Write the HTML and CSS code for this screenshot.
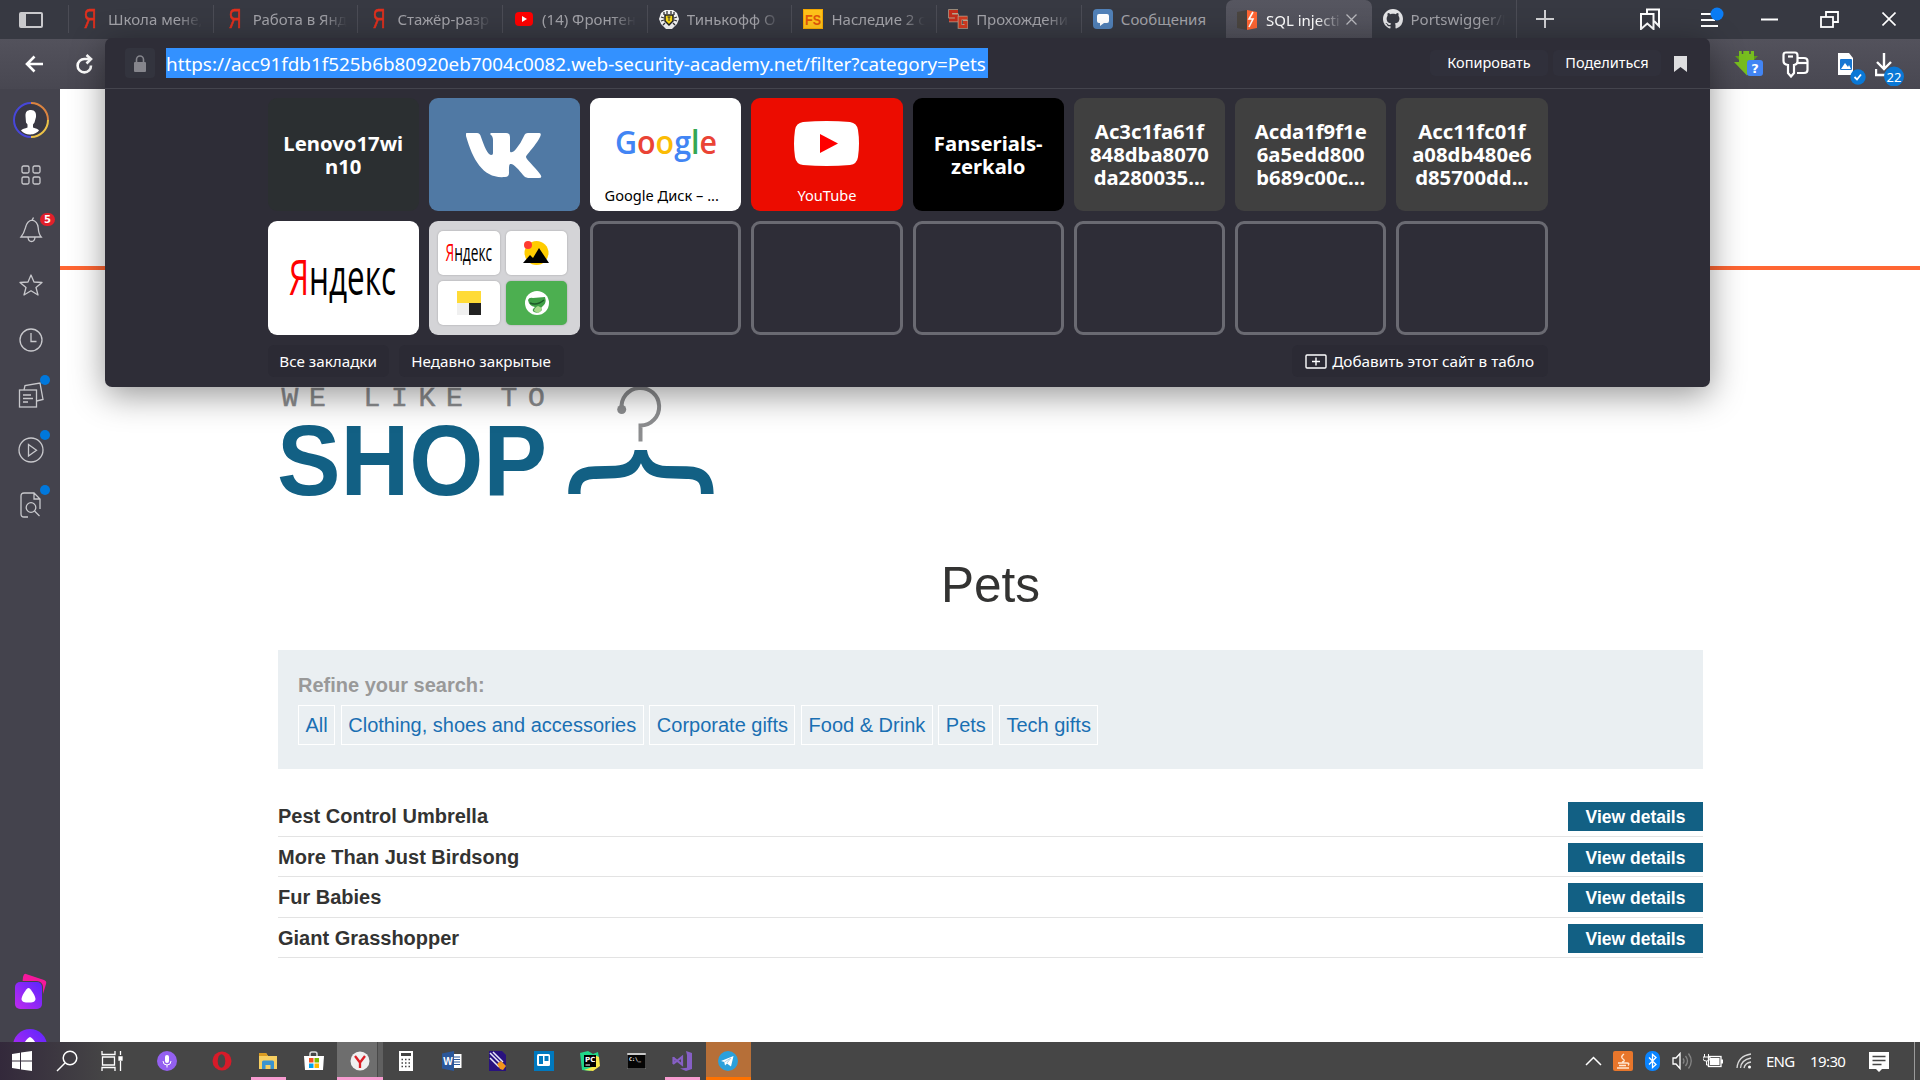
FILE: index.html
```html
<!DOCTYPE html>
<html lang="ru">
<head>
<meta charset="utf-8">
<title>SQL injection</title>
<link rel="stylesheet" href="styles.css">
</head>
<body>
<div class="screen">
  <header class="tabstrip">
    <div class="panel-toggle"><svg width="24" height="16" viewBox="0 0 24 16"><rect x="1" y="1" width="22" height="14" rx="1" fill="none" stroke="#c9c9cc" stroke-width="2"/><rect x="1" y="1" width="6" height="14" fill="#c9c9cc"/></svg></div>
    <div class="tab"><span class="fav ya">Я</span><span class="tab-title">Школа мене,</span></div>
    <div class="tab"><span class="fav ya">Я</span><span class="tab-title">Работа в Янд</span></div>
    <div class="tab"><span class="fav ya">Я</span><span class="tab-title">Стажёр-разр</span></div>
    <div class="tab"><svg class="fav" width="20" height="20" viewBox="0 0 20 20"><rect x="1" y="3" width="18" height="14" rx="4" fill="#f00"/><path d="M8 7l5 3-5 3z" fill="#fff"/></svg><span class="tab-title">(14) Фронтен</span></div>
    <div class="tab"><svg class="fav" width="20" height="20" viewBox="0 0 20 20"><path d="M6 1h8l4 3 2 6-2 5-5 5H7l-5-5-2-5 2-6z" fill="#f4f4f4"/><path d="M5 3v3M8 2v3M12 2v3M15 3v3M2 8l3 1M2 12l3-1M18 8l-3 1M18 12l-3-1M4 16l2-2M16 16l-2-2" stroke="#333" stroke-width="1.300"/><path d="M6 6h8v6l-4 4-4-4z" fill="#f7d917" stroke="#222" stroke-width="1.500"/><path d="M8.500 8h3M10 8v4" stroke="#333"/></svg><span class="tab-title">Тинькофф О</span></div>
    <div class="tab"><svg class="fav" width="20" height="20" viewBox="0 0 20 20"><rect width="20" height="20" fill="#f5a800"/><rect x="1" y="1" width="18" height="18" fill="#ffc21a"/><text x="10" y="15.500" text-anchor="middle" textLength="16" lengthAdjust="spacingAndGlyphs" class="fs">FS</text></svg><span class="tab-title">Наследие 2 с</span></div>
    <div class="tab"><svg class="fav" width="20" height="20" viewBox="0 0 20 20"><path d="M10 2.500H2.500v4.500h6v4H1" fill="none" stroke="#b9a58f" stroke-width="4.600"/><path d="M10 2.500H2.500v4.500h6v4H1" fill="none" stroke="#c42d1c" stroke-width="3.200"/><path d="M19.500 9H12v8.500h6v-4h-3" fill="none" stroke="#b9a58f" stroke-width="4.600"/><path d="M19.500 9H12v8.500h6v-4h-3" fill="none" stroke="#d13a20" stroke-width="3"/></svg><span class="tab-title">Прохождени</span></div>
    <div class="tab"><svg class="fav" width="20" height="20" viewBox="0 0 20 20"><rect width="20" height="20" rx="4" fill="#5181b8"/><path d="M6 5h8q2 0 2 2v5q0 2-2 2h-3l-4 3v-3H6q-2 0-2-2V7q0-2 2-2z" fill="#fff"/></svg><span class="tab-title">Сообщения</span></div>
    <div class="tab active"><svg class="fav" width="20" height="20" viewBox="0 0 20 20"><path d="M0 2l10-2v20L0 18z" fill="#4a4540"/><path d="M10 0l10 2v16l-10 2z" fill="#ff6633"/><path d="M16 2l-4 7h4l-4 8" fill="none" stroke="#fff" stroke-width="1.600"/></svg><span class="tab-title">SQL injecti</span><svg class="tab-close" width="11" height="11" viewBox="0 0 11 11"><path d="M.5.5l10 10M10.500.5l-10 10" stroke="#b9b9be" stroke-width="1.300"/></svg></div>
    <div class="tab github"><svg class="fav" width="20" height="20" viewBox="0 0 16 16"><path fill="#e4e4e6" d="M8 0C3.580 0 0 3.580 0 8c0 3.540 2.290 6.530 5.470 7.590.4.070.55-.17.55-.38 0-.19-.01-.82-.01-1.490-2.010.37-2.530-.49-2.690-.94-.09-.23-.48-.94-.82-1.130-.28-.15-.68-.52-.01-.53.63-.01 1.080.58 1.230.82.72 1.210 1.870.87 2.330.66.070-.52.28-.87.51-1.070-1.780-.2-3.640-.89-3.640-3.950 0-.87.31-1.590.82-2.150-.08-.2-.36-1.020.08-2.120 0 0 .67-.21 2.200.82.64-.18 1.320-.27 2-.27s1.360.09 2 .27c1.530-1.040 2.200-.82 2.200-.82.44 1.100.16 1.920.08 2.120.51.56.82 1.270.82 2.150 0 3.070-1.870 3.750-3.650 3.950.29.25.54.73.54 1.480 0 1.070-.01 1.930-.01 2.200 0 .21.15.46.55.38A8.010 8.010 0 0 0 16 8c0-4.420-3.580-8-8-8z"/></svg><span class="tab-title">Portswigger/L</span></div>
    <div class="new-tab"><svg width="18" height="18" viewBox="0 0 18 18"><path d="M9 0v18M0 9h18" stroke="#d0d0d3" stroke-width="2"/></svg></div>
    <div class="window-controls">
      <svg width="20" height="22" viewBox="0 0 20 22" fill="none" stroke="#fff" stroke-width="2"><path d="M7 6V1.500h12V18l-5-5"/><path d="M1 6h12.500v15l-6.200-5.500L1 21z"/></svg>
      <svg class="menu-icon" width="24" height="22" viewBox="0 0 24 22"><path d="M1 8h10M1 14h14M1 20h17" stroke="#fff" stroke-width="2"/><circle cx="17" cy="8" r="6.500" fill="#0a7cf5"/></svg>
      <svg class="min-icon" width="17" height="3" viewBox="0 0 17 3"><path d="M0 1.500h17" stroke="#fff" stroke-width="2"/></svg>
      <svg class="restore-icon" width="19" height="17" viewBox="0 0 19 17" fill="none" stroke="#fff" stroke-width="1.800"><rect x="1" y="6" width="12" height="10"/><path d="M6 6V1h12v10h-5"/></svg>
      <svg class="close-icon" width="14" height="14" viewBox="0 0 14 14"><path d="M.5.5l13 13M13.500.5l-13 13" stroke="#fff" stroke-width="1.600"/></svg>
    </div>
  </header>

  <div class="toolbar">
    <svg class="back" width="20" height="18" viewBox="0 0 20 18" fill="none" stroke="#fff" stroke-width="2.600"><path d="M18 9H2M9.500 1.500L2 9l7.500 7.500"/></svg>
    <svg class="reload" width="18" height="20" viewBox="0 0 18 20" fill="none" stroke="#fff" stroke-width="2.600"><path d="M15 11.500A6.700 6.700 0 1 1 8.500 5H14"/><path d="M10.500 1l4.500 4-4.500 4.500"/></svg>
    <div class="extensions">
      <svg width="30" height="26" viewBox="0 0 30 26"><path d="M5 0h15v11h5L13 24.500 0 11h5z" fill="#77bd1f"/><path d="M1 5l4 4V5zM24 5l-4 4V5z" fill="#5c9a18"/><path d="M8.500 0v3M16 0v3" stroke="#4b4a54" stroke-width="1.500"/><rect x="13" y="9" width="16" height="16" rx="3" fill="#4285f4"/><text x="21" y="22" text-anchor="middle" class="qmark">?</text></svg>
      <svg class="key-icon" width="27" height="27" viewBox="0 0 27 27" fill="none" stroke="#fff" stroke-width="2.200"><path d="M14 7h8q3.500 0 3.500 3v9q0 3-3.500 3h-7"/><path d="M16 12h9"/><path d="M4 1.500h9q2.500 0 2.500 3v6q0 3-3.500 3.500V22l-3 3.500L6 22v-8q-4.500-.5-4.500-4V4q0-2.500 2.500-2.500z" fill="#4b4a54"/><path d="M6 5.500h5"/></svg>
      <svg class="file-icon" width="30" height="34" viewBox="0 0 30 34"><path d="M1 1h11l4 5v17H1z" fill="#fff"/><rect x="3" y="7" width="12" height="11" rx="1" fill="#1676d2"/><path d="M4 17l4-6 3 4 1-2 2 4z" fill="#fff"/><circle cx="21" cy="25" r="7.700" fill="#0a78d6"/><path d="M17.500 25l2.500 2.500 4-5" fill="none" stroke="#fff" stroke-width="1.800"/></svg>
      <svg class="download-icon" width="32" height="34" viewBox="0 0 32 34"><path d="M9 1v16M2 10l7 7 7-7M1 17v6h10" fill="none" stroke="#fff" stroke-width="2.400"/><circle cx="19" cy="24.500" r="10" fill="#0a78d6"/><text x="19" y="29.500" text-anchor="middle" class="count">22</text></svg>
    </div>
  </div>

  <div class="main">
    <aside class="sidebar">
      <div class="side-item avatar"><svg width="36" height="36" viewBox="0 0 36 36"><circle cx="18" cy="18" r="17" fill="#393843"/><g fill="none" stroke-width="2"><path d="M18 35A17 17 0 0 1 18 1" stroke="#4747d9"/><path d="M18 1A17 17 0 0 1 35 18" stroke="#dc8440"/><path d="M35 18A17 17 0 0 1 18 35" stroke="#edc348"/></g><path d="M18 8c4 0 5.500 3 5 7l-1.500 5.500-1.500 2v3c3 1 5 1.500 6 3-3 3.500-6.500 4-9.500 4s-6-1.500-8.500-4c1-1.500 4-2 6.500-3v-3l-1.500-2L12.500 14c-.2-4 1.500-6 5.500-6z" fill="#fff"/></svg></div>
      <div class="side-item"><svg width="20" height="20" viewBox="0 0 20 20" fill="none" stroke="#c8c8cc" stroke-width="1.300"><rect x="1" y="1" width="7" height="7" rx="1.500"/><rect x="12" y="1" width="7" height="7" rx="1.500"/><rect x="1" y="12" width="7" height="7" rx="1.500"/><rect x="12" y="12" width="7" height="7" rx="1.500"/></svg></div>
      <div class="side-item"><svg width="24" height="28" viewBox="0 0 24 28" fill="none" stroke="#c8c8cc" stroke-width="1.300"><path d="M14.500 1.500l-1.300 2.600c3.800.8 5.600 3.700 6 7.600.3 4.500 1 7 3 9.300L2 21c3-3.500 3.500-6 4.500-9.500 1-4.200 3-7 6.700-7.400zM9 21.500q.5 4 3.500 4t3.500-4"/></svg><span class="badge">5</span></div>
      <div class="side-item"><svg width="24" height="22" viewBox="0 0 24 22" fill="none" stroke="#c8c8cc" stroke-width="1.300" stroke-linejoin="round"><path d="M12 1l3 7 8 .5-6 5 2 7.500-7-4.200L5 21l2-7.500-6-5L9 8z"/></svg></div>
      <div class="side-item"><svg width="24" height="24" viewBox="0 0 24 24" fill="none" stroke="#c8c8cc" stroke-width="1.300"><circle cx="12" cy="12" r="11"/><path d="M12 5v8.500h5.500"/></svg></div>
      <div class="side-item"><svg width="26" height="26" viewBox="0 0 26 26" fill="none" stroke="#c8c8cc" stroke-width="1.300"><path d="M6 8l1-4.500L22 1l3 16.500-6.500 1.500"/><rect x="1.500" y="8" width="17" height="17"/><path d="M5 13h8M5 16.500h10M5 20h5"/></svg><i class="dot"></i></div>
      <div class="side-item"><svg width="26" height="26" viewBox="0 0 26 26" fill="none" stroke="#c8c8cc" stroke-width="1.300"><circle cx="13" cy="13" r="12"/><path d="M10.500 7.500v11.500l8-5.700z"/></svg><i class="dot"></i></div>
      <div class="side-item"><svg width="22" height="26" viewBox="0 0 22 26" fill="none" stroke="#c8c8cc" stroke-width="1.300"><path d="M8 25H4q-3 0-3-3V4q0-3 3-3h10l6 6v10M14 1v6h6"/><circle cx="11" cy="15.500" r="4.800"/><path d="M14.500 19l5 5"/></svg><i class="dot"></i></div>
      <div class="alice">
        <svg width="34" height="37" viewBox="0 0 34 37"><defs><linearGradient id="al" x1="0" y1="1" x2="1" y2="0"><stop offset="0" stop-color="#c02aee"/><stop offset="1" stop-color="#5a26ff"/></linearGradient></defs><path d="M12 1l18 6q3 1 2 4l-3 10-10-7H8l1-10q1-4 3-3z" fill="#f5189c"/><rect x="0" y="8" width="29" height="29" rx="6" fill="#44434d"/><rect x="1" y="9" width="27" height="27" rx="5" fill="url(#al)"/><path d="M14.500 15c2 0 7 8 7 11s-3.500 3.500-7 3.500-7-.5-7-3.500 5-11 7-11z" fill="#fff"/></svg>
        <svg class="alice-round" width="34" height="13" viewBox="0 0 34 13"><circle cx="17" cy="17" r="17" fill="url(#al)"/><path d="M17 8c2 0 8 8 8 12H9c0-4 6-12 8-12z" fill="#fff"/></svg>
      </div>
    </aside>

    <main class="page">
      <div class="rule"></div>
      <div class="container">
        <svg class="logo" width="440" height="120" viewBox="278 380 440 120">
          <text class="logo-small" x="281.500 309 336 363.500 391 418.500 446 473 500.500 528" y="405.500">WE LIKE TO</text>
          <text class="logo-big" x="277" y="494.500" textLength="270" lengthAdjust="spacingAndGlyphs">SHOP</text>
          <g fill="none" stroke="#8c8d8f" stroke-width="4"><path d="M621.700 409A18.800 18.800 0 1 1 640.500 425.500V441.500"/></g><circle cx="621.700" cy="409.500" r="4.500" fill="#8c8d8f"/>
          <path transform="translate(250 370) scale(.3333)" fill="#126084" d="M1154 240H1191C1195 270 1215 287 1250 288L1310 289C1370 290 1391 320 1391 372H1353C1353 340 1348 328 1310 327L1250 325C1205 322 1185 310 1173 280C1161 310 1140 322 1095 325L1037 327C998 328 992 340 992 372H955C955 320 976 290 1036 289L1096 287C1130 286 1150 270 1154 240Z"/>
        </svg>
        <h1>Pets</h1>
        <section class="filters">
          <p>Refine your search:</p>
          <a>All</a> <a>Clothing, shoes and accessories</a> <a>Corporate gifts</a> <a>Food &amp; Drink</a> <a>Pets</a> <a>Tech gifts</a>
        </section>
        <ul class="products">
          <li><span>Pest Control Umbrella</span><a class="btn">View details</a></li>
          <li><span>More Than Just Birdsong</span><a class="btn">View details</a></li>
          <li><span>Fur Babies</span><a class="btn">View details</a></li>
          <li><span>Giant Grasshopper</span><a class="btn">View details</a></li>
        </ul>
      </div>
    </main>
  </div>

  <footer class="taskbar">
    <div class="sys"><svg width="20" height="20" viewBox="0 0 20 20" fill="#fff"><path d="M0 3l8-1.200v7.700H0zM9 1.600L20 0v9.500H9zM0 10.500h8v7.700L0 17zM9 10.500h11V20L9 18.400z"/></svg></div>
    <div class="sys"><svg width="22" height="22" viewBox="0 0 22 22" fill="none" stroke="#fff" stroke-width="1.500"><circle cx="14" cy="8" r="6.800"/><path d="M9 13L1 21"/></svg></div>
    <div class="sys"><svg width="22" height="20" viewBox="0 0 22 20" fill="none" stroke="#fff" stroke-width="1.300"><path d="M1 0v3.500h13V0M1 20v-3.500h13V20M1.500 6h12v8h-12zM19.500 0v4M19.500 10v10"/><path d="M18 6h3v3h-3z" fill="#fff"/></svg></div>
    <div class="sys mic"><svg width="20" height="20" viewBox="0 0 20 20"><circle cx="10" cy="10" r="10" fill="#9460f0"/><rect x="8" y="4" width="4" height="8" rx="2" fill="#fff"/><path d="M6 10q0 4 4 4t4-4M10 14v2.500" fill="none" stroke="#fff"/></svg></div>
    <div class="app"><svg width="20" height="20" viewBox="0 0 20 20"><circle cx="10" cy="10" r="9.500" fill="#d81b29"/><path d="M10 1a9 9 0 0 0 0 18 7 7 0 0 1 0-18z" fill="#a60f1c"/><ellipse cx="9.500" cy="10" rx="3.800" ry="6.700" fill="#464646"/></svg></div>
    <div class="app open"><svg width="20" height="18" viewBox="0 0 20 18"><path d="M1 1h7l2 3h9v13H1z" fill="#f7cf61"/><path d="M1 1h7l2 3H1z" fill="#d99b22"/><path d="M4 17v-7q0-1.500 1.500-1.500h9Q16 8.500 16 10v7h-3.500v-4h-5v4z" fill="#3a94d0"/></svg></div>
    <div class="app"><svg width="20" height="20" viewBox="0 0 20 20"><path d="M6 6V3q0-2 2-2h3q2 0 2 2v3" fill="none" stroke="#ddd" stroke-width="1.500"/><path d="M0 5h20l-1 14H1z" fill="#fff"/><path d="M5 7h4.500v4.500H5z" fill="#f25022"/><path d="M10.500 7H15v4.500h-4.500z" fill="#7fba00"/><path d="M5 12.500h4.500V17H5z" fill="#00a4ef"/><path d="M10.500 12.500H15V17h-4.500z" fill="#ffb900"/></svg></div>
    <div class="app open current"><svg width="20" height="20" viewBox="0 0 20 20"><circle cx="10" cy="10" r="9.500" fill="#f0f0f0"/><path d="M5 5l5 6.500L15 5M10 11v6" fill="none" stroke="#dc1f26" stroke-width="2.300"/></svg></div>
    <div class="app"><svg width="14" height="20" viewBox="0 0 14 20"><rect width="14" height="20" fill="#fff"/><rect x="2" y="2" width="10" height="3" fill="#444"/><path d="M2.500 8.500h10M2.500 12h10M2.500 15.500h10" stroke="#444" stroke-width="1.500" stroke-dasharray="1.500 2"/></svg></div>
    <div class="app"><svg width="20" height="20" viewBox="0 0 20 20"><rect x="10" y="3" width="9.500" height="14" fill="#fff"/><path d="M12 6h6M12 8.500h6M12 11h6M12 13.500h6" stroke="#2b579a" stroke-width="1.200"/><path d="M0 2.500L12 0v20L0 17.500z" fill="#2b579a"/><text x="6" y="14" text-anchor="middle" class="word">W</text></svg></div>
    <div class="app"><svg width="18" height="20" viewBox="0 0 18 20"><path d="M0 0h13l4 4v16H0z" fill="#29127e"/><path d="M1 2l12 12M1 7l9 9M4 1l10 10" stroke="#e8e8f8" stroke-width="1.500"/><path d="M8 13l4-3 5 5-3 4-3-1z" fill="#f3951c"/></svg></div>
    <div class="app"><svg width="20" height="20" viewBox="0 0 20 20"><rect width="20" height="20" fill="#0079bf"/><rect x="3" y="3" width="13" height="12" rx="1.500" fill="#fff"/><rect x="5" y="5" width="4" height="8" fill="#0079bf"/><rect x="10.500" y="5" width="4" height="5" fill="#0079bf"/></svg></div>
    <div class="app"><svg width="20" height="20" viewBox="0 0 20 20"><path d="M0 2l8-2 5 3 5-2 1 6-3 9-6 4-8-1z" fill="#21d789"/><path d="M14 4l5 2 1 9-7 5-9-1 11-4z" fill="#f7e84b"/><rect x="4" y="4" width="12" height="12" fill="#000"/><text x="5" y="11" class="pc">PC</text><path d="M5.500 14h4.500" stroke="#fff"/></svg></div>
    <div class="app"><svg width="19" height="16" viewBox="0 0 19 16"><rect width="19" height="16" fill="#050505"/><path d="M0 0h19v2H0z" fill="#c9c9c9"/><path d="M0 0v16h19V0" fill="none" stroke="#888" stroke-width="1"/><text x="2" y="8" class="cmd">C:\_</text></svg></div>
    <div class="app open"><svg width="20" height="20" viewBox="0 0 20 20"><path d="M14 0l6 2v16l-6 2-6-2.500 7-.8V4z" fill="#865fc5"/><path d="M1.500 6v7M1 6.500l9 7V6l-9 7" fill="none" stroke="#865fc5" stroke-width="2.200"/></svg></div>
    <div class="app alert"><svg width="20" height="20" viewBox="0 0 20 20"><circle cx="10" cy="10" r="10" fill="#2ba0db"/><path d="M3 10l12.500-5L13 15.500l-4-3-2 2-.7-3.500z" fill="#fff"/><path d="M6.500 11l6.500-4-4 5" fill="none" stroke="#a8cfe6"/></svg></div>
    <div class="tray">
      <svg width="17" height="10" viewBox="0 0 17 10"><path d="M1 9l7.500-7.500L16 9" fill="none" stroke="#fff" stroke-width="1.500"/></svg>
      <svg class="java" width="20" height="20" viewBox="0 0 20 20"><rect width="20" height="20" rx="2" fill="#e8762b"/><path d="M11 3q-4 3-1 5t-1 3M5 12h9q3 0 1 2.500M6 14.500h7M4 17h12" fill="none" stroke="#ffe7d1" stroke-width="1.400"/></svg>
      <svg class="bt" width="15" height="20" viewBox="0 0 15 20"><rect width="15" height="20" rx="7" fill="#0a84ff"/><path d="M4 6.500l7 7-3.500 3v-13L11 6.500l-7 7" fill="none" stroke="#fff" stroke-width="1.300"/></svg>
      <svg class="vol" width="21" height="18" viewBox="0 0 21 18" fill="none" stroke="#fff" stroke-width="1.300"><path d="M1 6h3l4-4.500v15L4 12H1z"/><path d="M11 6.500q2 2.500 0 5M13.500 4q4 5 0 10M16.500 1.500q5.500 7.500 0 15" stroke="#858585"/></svg>
      <svg class="bat" width="20" height="14" viewBox="0 0 20 14" fill="none" stroke="#fff"><path d="M1.500 0v3M5.500 0v3M0 3h7v2q0 2-3.500 2T0 5zM3.500 7v4h2"/><rect x="5.500" y="2.500" width="12.500" height="10" stroke-width="1.300"/><path d="M7 4h9.500v7H7z" fill="#fff" stroke="none"/><path d="M19 5.500v4" stroke-width="2"/></svg>
      <svg class="wifi" width="16" height="16" viewBox="0 0 16 16" fill="none" stroke="#d8d8d8" stroke-width="1.300"><path d="M1 15Q2 3 15 1M4.500 15Q5 7 15 5M8 15q1-5 7-6"/><circle cx="13.500" cy="14" r="1.500" fill="#fff" stroke="none"/></svg>
      <span class="lang">ENG</span><span class="time">19:30</span>
      <svg class="notif" width="20" height="20" viewBox="0 0 20 20"><path d="M0 0h20v17h-7l-3 3-3-3H0z" fill="#fff"/><path d="M3.500 4.500h13M3.500 8.500h13M3.500 12.500h9" stroke="#464646" stroke-width="1.300"/></svg>
    </div>
  </footer>

  <div class="popup">
    <div class="address">
      <span class="lock"><svg width="12" height="17" viewBox="0 0 12 17"><path d="M2.500 8V4.500a3.500 3.500 0 0 1 7 0V8" fill="none" stroke="#85858c" stroke-width="1.600"/><rect y="7" width="12" height="10" rx="1" fill="#85858c"/></svg></span>
      <span class="url">https://acc91fdb1f525b6b80920eb7004c0082.web-security-academy.net/filter?category=Pets</span>
      <span class="pill copy">Копировать</span><span class="pill share">Поделиться</span>
      <svg class="mark" width="13" height="16" viewBox="0 0 13 16"><path d="M0 0h13v16l-6.500-5L0 16z" fill="#dedee0"/></svg>
    </div>
    <div class="tableau">
      <div class="tiles">
        <div class="tile lenovo">Lenovo17wi<br>n10</div>
        <div class="tile vk"><svg width="76" height="46" viewBox="0 0 76 46"><path d="M1 1h10q3 0 4 4c3 9 7 18 10 18 2 0 2-1 2-3V8q0-4-3-6l1-1h15q4 0 4 4v14c0 2 3 2 6-2q5-6 8-13 1-3 4-3h11q3 0 1 4c-3 7-14 18-14 20s8 9 14 17q3 4-1 4H62q-3 0-5-3c-4-5-9-11-12-11-2 0-2 1-2 9q0 4-4 4C18 47 7 29 0 4q-1-3 1-3z" fill="#fff"/></svg></div>
        <div class="tile google"><svg width="100" height="38" viewBox="0 0 100 38"><text class="google-word" x="-1" y="27.500" textLength="102" lengthAdjust="spacingAndGlyphs"><tspan fill="#4285f4">G</tspan><tspan fill="#ea4335">o</tspan><tspan fill="#fbbc05">o</tspan><tspan fill="#4285f4">g</tspan><tspan fill="#34a853">l</tspan><tspan fill="#ea4335">e</tspan></text></svg><span class="label">Google Диск – ...</span></div>
        <div class="tile youtube"><svg width="65" height="45" viewBox="0 0 65 45"><path d="M9 1q24-2 47 0 7 1 8 8 2 13 0 27-1 7-8 8-23 2-47 0-7-1-8-8-2-13 0-27 1-7 8-8z" fill="#fff"/><path d="M26 13l18 9.500L26 32z" fill="#f00"/></svg><span class="label">YouTube</span></div>
        <div class="tile black">Fanserials-<br>zerkalo</div>
        <div class="tile gray">Ac3c1fa61f<br>848dba8070<br>da280035...</div>
        <div class="tile gray">Acda1f9f1e<br>6a5edd800<br>b689c00c...</div>
        <div class="tile gray">Acc11fc01f<br>a08db480e6<br>d85700dd...</div>
        <div class="tile yandex"><svg width="110" height="50" viewBox="0 0 110 50"><text class="ya-word" x="1" y="42" fill="#f00" font-size="50" textLength="20" lengthAdjust="spacingAndGlyphs">Я</text><text class="ya-word" x="21" y="42" font-size="49" textLength="87" lengthAdjust="spacingAndGlyphs">ндекс</text></svg></div>
        <div class="tile folder">
          <div class="mini"><svg width="48" height="24" viewBox="0 0 110 50" preserveAspectRatio="none"><text class="ya-word" x="1" y="42" fill="#f00" font-size="50" textLength="20" lengthAdjust="spacingAndGlyphs">Я</text><text class="ya-word" x="21" y="42" font-size="49" textLength="87" lengthAdjust="spacingAndGlyphs">ндекс</text></svg></div>
          <div class="mini"><svg width="27" height="24" viewBox="0 0 27 24"><circle cx="13.500" cy="12" r="12" fill="#fc0"/><circle cx="5" cy="4" r="4" fill="#ff3b30"/><path d="M0 22l7-8 3 3 6-10 10 15z" fill="#000"/></svg></div>
          <div class="mini"><svg width="24" height="24" viewBox="0 0 24 24"><path d="M0 0h24v12H0z" fill="#ffdb37"/><path d="M0 12h12v12H0z" fill="#f0f0f0"/><path d="M12 12h12v12H12z" fill="#222"/></svg></div>
          <div class="mini green"><svg width="24" height="24" viewBox="0 0 24 24"><circle cx="12" cy="12" r="12" fill="#fff"/><path d="M3 9q1-3 5-2l12-1q2 6-2 9-3 2-1 4-3 4-8 2-3-2 1-5Q4 15 3 9z" fill="#3f9f45"/><path d="M5 12q7 3 14-3" fill="none" stroke="#1c5a27" stroke-width="1.500"/><path d="M9 20q0-3 4-5l4 2q-1 4-4 5z" fill="#a6d98a"/></svg></div>
        </div>
        <div class="tile empty"></div><div class="tile empty"></div><div class="tile empty"></div><div class="tile empty"></div><div class="tile empty"></div><div class="tile empty"></div>
      </div>
      <div class="actions">
        <span class="action all">Все закладки</span><span class="action recent">Недавно закрытые</span>
        <span class="action add"><svg width="22" height="15" viewBox="0 0 22 15" fill="none" stroke="#fff" stroke-width="1.400"><rect x="1" y="1" width="20" height="13" rx="1"/><path d="M11 3.500v8M7 7.500h8"/></svg><span>Добавить этот сайт в табло</span></span>
      </div>
    </div>
  </div>
</div>
</body>
</html>
```
FILE: styles.css
```css
* { box-sizing: border-box; }
body { margin: 0; font-family: "Noto Sans", "Open Sans", sans-serif; }
svg { display: block; flex: none; }

.screen {
  position: relative;
  display: flex;
  flex-direction: column;
  width: 1920px;
  height: 1080px;
  overflow: hidden;
  background: #fff;
}

/* tab strip */
.tabstrip { display: flex; flex: none; height: 39px; background: #373942; }
.panel-toggle { width: 68px; padding: 12px 0 0 19px; }
.tab {
  position: relative;
  display: flex;
  align-items: center;
  width: 144.7px;
  height: 38px;
  padding: 0 0 0 12px;
  gap: 8px;
  color: #a2a2a8;
  font-size: 15px;
}
.tab::before { content: ""; position: absolute; left: 0; top: 5px; width: 1px; height: 28px; background: #4b4c55; }
.fav { flex: none; width: 20px; }
.ya { color: #e0301e; font: 28px/34px "Liberation Sans", sans-serif; text-align: center; transform: scaleX(.62); -webkit-text-stroke: .7px #e0301e; }
.fs { fill: #e2570a; font: bold 15px "Liberation Sans", sans-serif; }
.tab-title {
  width: 97px;
  white-space: nowrap;
  -webkit-mask-image: linear-gradient(90deg, #000 70px, transparent 94px);
  mask-image: linear-gradient(90deg, #000 70px, transparent 94px);
}
.tab:nth-child(9) .tab-title { -webkit-mask-image: none; mask-image: none; }
.tab.active { width: 146px; height: 39px; background: linear-gradient(#565660, #50505a); border-radius: 7px 7px 0 0; color: #fff; padding-left: 11.500px; gap: 9px; }
.active::before, .github::before { display: none; }
.active .tab-title { width: 76px; margin-right: -5px; -webkit-mask-image: linear-gradient(90deg, #000 50px, transparent); mask-image: linear-gradient(90deg, #000 50px, transparent); }
.github { width: 145px; padding-left: 11px; gap: 8px; border-right: 1px solid #4b4c55; }
.new-tab { padding: 10px 0 0 19px; }
.window-controls { display: flex; align-items: flex-start; padding: 8px 0 0 86px; }
.menu-icon { margin: -2px 0 0 40px; }
.min-icon { margin: 10px 0 0 37px; }
.restore-icon { margin: 3px 0 0 42px; }
.close-icon { margin: 4px 0 0 43px; }

/* toolbar */
.toolbar { display: flex; flex: none; height: 50px; background: linear-gradient(#53525c, #484751); }
.back { margin: 16px 0 0 25px; }
.reload { margin: 15px 0 0 31px; }
.extensions { display: flex; margin-left: auto; padding: 12px 13px 0 0; }
.key-icon { margin-left: 18px; }
.file-icon { margin: 1px 0 0 28px; }
.download-icon { margin: 1px 0 0 8px; }
.qmark { fill: #fff; font: bold 13px "DejaVu Sans", sans-serif; }
.count { fill: #fff; font-size: 13px; }

/* sidebar */
.main { display: flex; flex: none; height: 953px; }
.sidebar { position: relative; display: flex; flex-direction: column; width: 60px; padding-top: 3px; background: #44434d; }
.side-item { position: relative; display: flex; align-items: center; justify-content: center; width: 61px; height: 55px; }
.badge { position: absolute; left: 40px; top: 11px; width: 15px; height: 13px; border-radius: 7px; background: #e0202b; color: #fff; font: bold 10px/13px "DejaVu Sans", sans-serif; text-align: center; }
.dot { position: absolute; left: 40px; top: 8px; width: 10px; height: 10px; border-radius: 50%; background: #0078dc; }
.alice { margin: auto 0 0 14px; }
.alice-round { margin: 19px 0 0 -1px; }

/* shop page */
.page { flex: 1; padding-top: 177px; font-family: "Liberation Sans", Arial, sans-serif; color: #333332; }
.rule { height: 4px; background: #ff6633; }
.container { width: 1425px; margin: 110px 0 0 218px; }
.logo { overflow: visible; }
.logo-small { font: 28px "Liberation Mono", monospace; fill: #8c8d8f; stroke: #8c8d8f; stroke-width: .5px; }
.logo-big { font: bold 101px "Liberation Sans", sans-serif; fill: #126084; }
h1 { margin: 56px 0 0; font-weight: 400; font-size: 49.500px; line-height: 58px; text-align: center; }
.filters { height: 119px; margin-top: 36px; padding: 24px 20px 0; background: #eaeff2; font-size: 20px; }
.filters p { margin: 0 0 8px; color: #999; font-weight: 700; line-height: 23px; }
.filters a { display: inline-block; height: 40px; padding: 0 6.500px; border: 1px solid #fff; color: #1a6fb3; line-height: 38px; }
.products { list-style: none; margin: 27px 0 0; padding: 0; }
.products li { display: flex; align-items: flex-start; justify-content: space-between; height: 40.600px; padding-top: 6px; border-bottom: 1px solid #e3e3e3; font-weight: 700; font-size: 20px; line-height: 29px; }
.btn { width: 135px; height: 29px; background: #126084; color: #fff; font-size: 17.500px; line-height: 30px; text-align: center; }

/* taskbar */
.taskbar { display: flex; flex: none; height: 38px; background: linear-gradient(90deg, #33293b, #464646 110px); color: #fff; }
.sys, .app { display: flex; align-items: center; justify-content: center; }
.sys { width: 45px; padding-right: 1px; }
.sys.mic { width: 64px; padding: 0; }
.app { position: relative; width: 46px; }
.open::after, .alert::after { content: ""; position: absolute; left: 6px; right: 5px; bottom: 0; height: 3px; background: #f79bd0; }
.current { background: linear-gradient(90deg, #6e6e6e 40px, #494949 40px, #494949 41px, #606060 41px); }
.current::after { left: 0; right: 0; }
.alert { background: linear-gradient(90deg, transparent 1px, #b66f38 1px); }
.alert::after { left: 1px; right: 0; background: #ff7200; }
.word { fill: #fff; font: bold 10px "Liberation Sans", sans-serif; }
.pc { fill: #fff; font: bold 7px "DejaVu Sans", sans-serif; }
.cmd { fill: #fff; font: bold 5px "DejaVu Sans Mono", monospace; }
.tray { display: flex; align-items: center; width: 343px; height: 38px; margin: 0 5px 0 auto; padding-left: 13px; border-right: 1px solid #9a9a9a; font-size: 15px; }
.java { margin-left: 11px; }
.bt { margin-left: 12px; }
.vol { margin-left: 12px; }
.bat { margin-left: 10px; }
.wifi { margin-left: 13px; }
.lang { width: 44px; margin-left: 14px; letter-spacing: -.8px; }
.time { width: 59px; letter-spacing: -.6px; }
.notif { margin-top: 1px; }

/* address dropdown over the page */
.popup {
  position: absolute;
  left: 105px;
  top: 38px;
  width: 1605px;
  height: 349px;
  border-radius: 7px;
  background: #2e2d37;
  box-shadow: 0 8px 34px rgba(0, 0, 0, .42);
  color: #fff;
  font-size: 15px;
}
.address { display: flex; height: 51px; padding: 10px 0 0 20px; border-bottom: 1px solid #44444d; }
.lock { display: flex; align-items: center; justify-content: center; width: 30px; height: 30px; border-radius: 4px; background: #33343e; }
.url { width: 822px; height: 30px; margin-left: 11px; background: #3391ff; font-size: 18.880px; line-height: 32px; white-space: nowrap; }
.pill { height: 26px; margin-top: 2px; border-radius: 5px; background: #30303b; line-height: 25px; text-align: center; font-size: 14.500px; white-space: nowrap; }
.copy { width: 118px; margin-left: 442px; }
.share { width: 108px; margin-left: 5px; }
.mark { margin: 8px 0 0 13px; }
.tableau { width: 1280px; margin: 9px 0 0 162.600px; }
.tiles { display: grid; grid-template-columns: repeat(8, 1fr); grid-template-rows: 113px 114px; gap: 10px; }
.tile { position: relative; display: flex; align-items: center; justify-content: center; min-width: 0; border-radius: 9px; text-align: center; font-size: 20.300px; font-weight: 700; line-height: 23px; white-space: nowrap; }
.lenovo { background: #2b2f31; }
.vk { background: #5079a4; }
.google { background: #fff; color: #000; align-items: flex-start; padding-top: 28px; }
.youtube { background: #ec0c00; align-items: flex-start; padding-top: 23px; }
.label { position: absolute; left: 0; right: 0; bottom: 4px; font-size: 14.600px; font-weight: 400; }
.google .label { right: 8px; }
.black { background: #000; }
.gray { background: #404040; }
.yandex { background: #fff; }
.empty { border: 3px solid #6a6a72; }
.google-word { font: 600 33px "Open Sans", sans-serif; }
.ya-word { font-family: "Open Sans", sans-serif; font-weight: 400; }
.folder { display: grid; grid-template-columns: 62px 61px; grid-template-rows: 44px 44px; align-content: center; gap: 6px; padding-right: 3px; background: #d4d4d7; }
.mini { display: flex; align-items: center; justify-content: center; height: 44px; border-radius: 5px; background: #fff; box-shadow: 0 0 2px rgba(0, 0, 0, .25); }
.green { background: #4caf50; }
.actions { display: flex; margin-top: 10px; height: 32px; }
.action { display: flex; align-items: center; justify-content: center; border-radius: 6px; background: #2b2a34; font-size: 15.200px; white-space: nowrap; }
.all { width: 121px; }
.recent { width: 165px; margin-left: 10px; }
.add { width: 256px; margin-left: auto; gap: 5px; font-size: 15.300px; }
```
